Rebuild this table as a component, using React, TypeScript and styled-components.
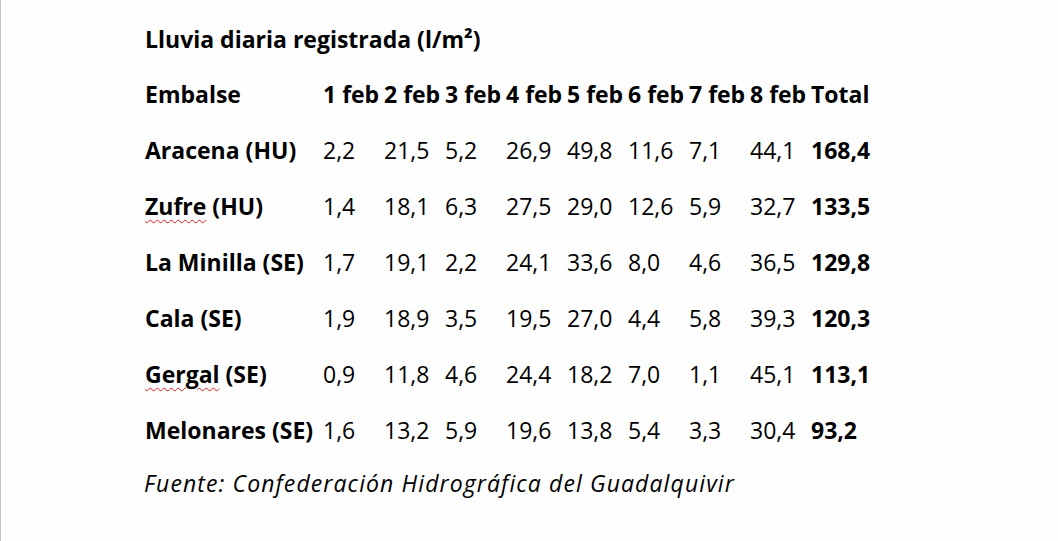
import React from 'react'
import styled, { createGlobalStyle } from 'styled-components'

const GlobalStyle = createGlobalStyle`
  html, body {
    margin: 0;
    padding: 0;
    background: #fefefe;
  }
`

const Page = styled.div`
  width: 1058px;
  height: 541px;
  box-sizing: border-box;
  border-left: 1px solid #c4c4c4;
  padding: 12px 0 0 143px;
  font-family: 'Open Sans', 'Noto Sans', sans-serif;
  font-size: 23px;
  color: #000;
  overflow: hidden;
`

const Title = styled.div`
  height: 54px;
  line-height: 54px;
  font-weight: 700;
  padding-left: 1px;
`

const Table = styled.div`
  display: grid;
  grid-template-columns: 178px repeat(8, 61px) auto;
  grid-auto-rows: 56px;
  align-items: center;
  padding-left: 1px;
`

const Cell = styled.div<{ $bold?: boolean }>`
  font-weight: ${({ $bold }) => ($bold ? 700 : 400)};
  white-space: nowrap;
`

const Misspelled = styled.span`
  text-decoration: underline wavy #e0201a;
  text-decoration-thickness: 1px;
  text-underline-offset: 4px;
`

const Source = styled.div`
  height: 50px;
  line-height: 50px;
  font-style: italic;
  letter-spacing: 1.1px;
`

const dates = ['1 feb', '2 feb', '3 feb', '4 feb', '5 feb', '6 feb', '7 feb', '8 feb']

type Row = { name: React.ReactNode; values: string[]; total: string }

const rows: Row[] = [
  { name: 'Aracena (HU)', values: ['2,2', '21,5', '5,2', '26,9', '49,8', '11,6', '7,1', '44,1'], total: '168,4' },
  {
    name: (
      <>
        <Misspelled>Zufre</Misspelled> (HU)
      </>
    ),
    values: ['1,4', '18,1', '6,3', '27,5', '29,0', '12,6', '5,9', '32,7'],
    total: '133,5',
  },
  { name: 'La Minilla (SE)', values: ['1,7', '19,1', '2,2', '24,1', '33,6', '8,0', '4,6', '36,5'], total: '129,8' },
  { name: 'Cala (SE)', values: ['1,9', '18,9', '3,5', '19,5', '27,0', '4,4', '5,8', '39,3'], total: '120,3' },
  {
    name: (
      <>
        <Misspelled>Gergal</Misspelled> (SE)
      </>
    ),
    values: ['0,9', '11,8', '4,6', '24,4', '18,2', '7,0', '1,1', '45,1'],
    total: '113,1',
  },
  { name: 'Melonares (SE)', values: ['1,6', '13,2', '5,9', '19,6', '13,8', '5,4', '3,3', '30,4'], total: '93,2' },
]

export default function App() {
  return (
    <>
      <GlobalStyle />
      <Page>
        <Title>Lluvia diaria registrada (l/m²)</Title>
        <Table>
          <Cell $bold>Embalse</Cell>
          {dates.map((d) => (
            <Cell $bold key={d}>
              {d}
            </Cell>
          ))}
          <Cell $bold>Total</Cell>
          {rows.map((row, i) => (
            <React.Fragment key={i}>
              <Cell $bold>{row.name}</Cell>
              {row.values.map((v, j) => (
                <Cell key={j}>{v}</Cell>
              ))}
              <Cell $bold>{row.total}</Cell>
            </React.Fragment>
          ))}
        </Table>
        <Source>Fuente: Confederación Hidrográfica del Guadalquivir</Source>
      </Page>
    </>
  )
}
